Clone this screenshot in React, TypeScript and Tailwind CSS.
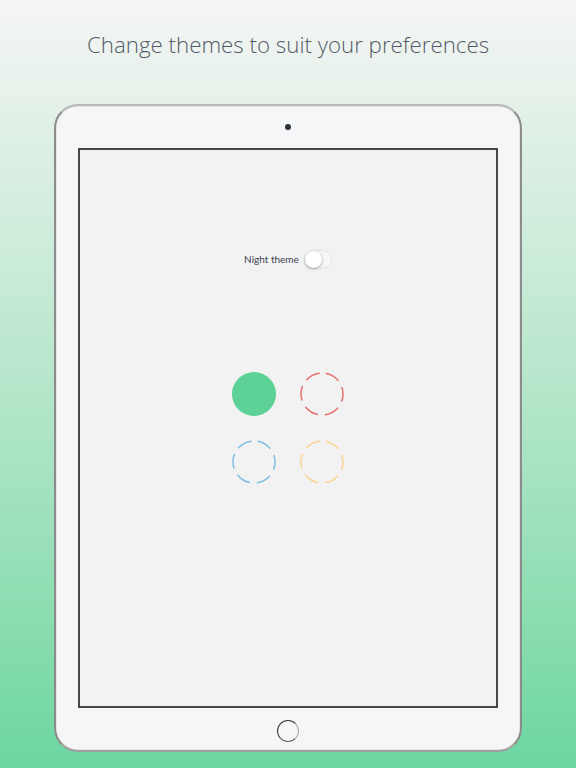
const DashedCircle = ({ color }: { color: string }) => (
  <svg width="44" height="44" viewBox="0 0 44 44">
    <circle
      cx="22"
      cy="22"
      r="21"
      fill="none"
      stroke={color}
      strokeWidth="1.5"
      strokeDasharray="15 7"
      transform="rotate(-80 22 22)"
    />
  </svg>
);

export default function App() {
  return (
    <div
      className="w-[576px] h-[768px] overflow-hidden flex flex-col items-center bg-gradient-to-b from-[#f5f5f5] to-[#6bd6a1]"
      style={{ fontFamily: '"Open Sans", "Noto Sans", sans-serif' }}
    >
      {/* headline */}
      <div className="h-[104px] w-full pt-[29px] text-center">
        <h1 className="text-[22.3px] leading-[32px] font-light text-[#535b69]">
          Change themes to suit your preferences
        </h1>
      </div>

      {/* tablet frame */}
      <div className="w-[468px] h-[648px] rounded-[24px] bg-[#f5f6f8] border-2 border-[#8c8c8c] border-t-[#b8b8b8] border-b-[#a0a0a0] flex flex-col items-center shadow-[inset_0_0_0_1px_#e6e6e6]">
        <div className="h-[42px] flex items-center justify-center">
          <div className="w-[6px] h-[6px] rounded-full bg-[#2b2f36]" />
        </div>

        <div className="w-[420px] h-[560px] border-2 border-[#474747] bg-[#f2f2f2] flex flex-col items-center">
          <div className="mt-[100px] flex items-center gap-[5px]">
            <span className="text-[10px] text-[#3d4250]" style={{ fontFamily: "Lato, sans-serif" }}>
              Night theme
            </span>
            <div className="w-[28px] h-[19px] rounded-full border border-[#e3e3e3] bg-[#f7f7f7] flex items-center">
              <div className="w-[17px] h-[17px] rounded-full bg-white shadow-[0_1px_3px_rgba(0,0,0,0.35)]" />
            </div>
          </div>

          <div className="mt-[103px] grid grid-cols-2 gap-[24px]">
            <div className="w-[44px] h-[44px] rounded-full bg-[#5dd196]" />
            <DashedCircle color="#e86e6e" />
            <DashedCircle color="#7dbde3" />
            <DashedCircle color="#fbd591" />
          </div>
        </div>

        <div className="flex-1 flex items-center justify-center pt-[4px]">
          <div className="w-[22px] h-[22px] rounded-full border-[1.5px] border-[#3a3a3a] border-r-[#aaa] border-b-[#666]" />
        </div>
      </div>
    </div>
  );
}
